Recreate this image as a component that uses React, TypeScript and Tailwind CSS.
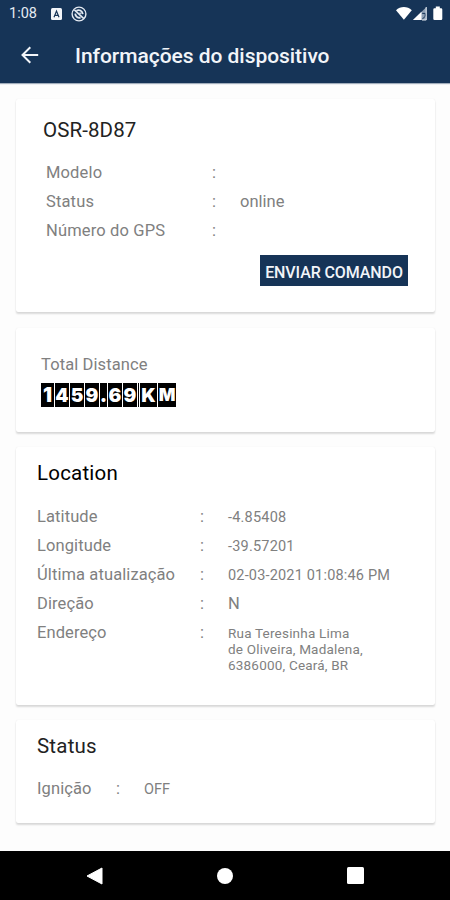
import type { ReactNode } from "react";
import clsx from "clsx";

type Field = {
  label: string;
  value?: string;
  valueClass?: string;
};

const locationFields: Field[] = [
  { label: "Latitude", value: "-4.85408", valueClass: "text-[14.5px] tracking-[0.2px]" },
  { label: "Longitude", value: "-39.57201", valueClass: "text-[14.5px] tracking-[0.2px]" },
  { label: "Última atualização", value: "02-03-2021 01:08:46 PM", valueClass: "text-[14.5px] tracking-[0.18px]" },
  { label: "Direção", value: "N", valueClass: "text-[16.5px]" },
];

const odometer = [
  { char: "1", width: "w-[13px] text-[20px]" },
  { char: "4", width: "w-[14px] text-[19px]" },
  { char: "5", width: "w-[14px] text-[19px]" },
  { char: "9", width: "w-[14px] text-[19px]" },
  { char: ".", width: "w-[7px] text-[20px]" },
  { char: "6", width: "w-[14px] text-[19px]" },
  { char: "9", width: "w-[14px] text-[19px]" },
  { char: "", width: "w-[1px]" },
  { char: "K", width: "w-[17px] text-[19px]" },
  { char: "M", width: "w-[18px] text-[17.5px]" },
];

function Card({ className, children }: { className?: string; children: ReactNode }) {
  return (
    <section
      className={clsx(
        "rounded-[2px] bg-white shadow-[0_2px_2px_rgba(0,0,0,0.14),0_0_1px_rgba(0,0,0,0.1)]",
        className
      )}
    >
      {children}
    </section>
  );
}

function StatusBar() {
  return (
    <div className="flex h-[27px] items-center justify-between pl-[9px] pr-[7px]">
      <div className="flex items-center">
        <span className="w-[42px] pt-px text-[14.5px] leading-none text-[#e4eaf2]">1:08</span>
        <svg width="11" height="12" viewBox="0 0 11 12">
          <rect width="11" height="12" rx="1.5" fill="#f2f5f9" />
          <path d="M3 9.2 5.5 3 8 9.2M4 7.3h3" fill="none" stroke="#163457" strokeWidth="1.2" />
        </svg>
        <svg className="ml-[9px]" width="16" height="16" viewBox="0 0 16 16" fill="none" stroke="#e4eaf2">
          <circle cx="8" cy="8" r="6.9" strokeWidth="1.4" />
          <path d="M3.4 3.8 12.8 12.6" strokeWidth="1.6" />
          <path d="M5.4 4.8C8 3.2 11.4 4.6 11.8 8.2M4.2 7.6C4.4 10.6 7 12.2 9.6 11.6" strokeWidth="1.8" />
          <path d="M8.2 7.2h2.2" strokeWidth="1.2" />
        </svg>
      </div>
      <svg width="47" height="15" viewBox="0 0 47 15">
        <path d="M0 4.2C4.4 0 11.4 0 15.8 4.2L7.9 13.8Z" fill="#fff" />
        <path d="M17 14 30.5 1V14Z" fill="#8fa0b4" />
        <path d="M17 14 25.5 5.8V14Z" fill="#fff" />
        <path d="M26.2 7.4h3v3l-3 2.8" fill="none" stroke="#163457" strokeWidth="1" />
        <path d="M30.2 1V14H26" fill="none" stroke="#e4eaf2" strokeWidth="1" />
        <path d="M39.8 0.6h4v1.6h1.3a1.2 1.2 0 0 1 1.2 1.2v9.4a1.2 1.2 0 0 1-1.2 1.2h-6.6a1.2 1.2 0 0 1-1.2-1.2V3.4a1.2 1.2 0 0 1 1.2-1.2h1.3Z" fill="#fff" />
      </svg>
    </div>
  );
}

function Header() {
  return (
    <header className="h-[83px] shrink-0 bg-[#163457] shadow-[0_1px_1px_rgba(22,52,87,0.4)]">
      <StatusBar />
      <div className="flex h-[56px] items-center pl-[21px]">
        <svg width="18" height="18" viewBox="0 0 18 18" fill="none" stroke="#f2f5f9" strokeWidth="2">
          <path d="M17.2 9H2M9.3 1.2 1.5 9l7.8 7.8" />
        </svg>
        <h1 className="ml-[36px] whitespace-nowrap pt-[2px] text-[21px] font-medium leading-none tracking-[-0.04px] text-[#f2f5f9]">
          Informações do dispositivo
        </h1>
      </div>
    </header>
  );
}

function DeviceRow({ label, value }: Field) {
  return (
    <div className="flex h-[29px] items-center text-[16.5px] tracking-[0.15px]">
      <span className="w-[166px]">{label}</span>
      <span className="w-[28px]">:</span>
      <span className="tracking-normal">{value}</span>
    </div>
  );
}

function NavigationBar() {
  return (
    <nav className="flex h-[49px] shrink-0 items-center justify-between bg-black px-[86px]">
      <svg width="17" height="18" viewBox="0 0 17 18" fill="#fff">
        <path d="M16 1v16L1 9Z" stroke="#fff" strokeLinejoin="round" />
      </svg>
      <span className="size-[16px] rounded-full bg-white" />
      <span className="size-[17px] rounded-[1.5px] bg-white" />
    </nav>
  );
}

export default function App() {
  return (
    <div className="flex h-[900px] w-[450px] flex-col overflow-hidden bg-[#fdfdfd] font-['Roboto',sans-serif] text-[#808080]">
      <Header />
      <main className="flex flex-1 flex-col pl-4 pr-[15px] pt-4">
        <Card className="flex h-[213px] flex-col pl-[27px] pt-[19px]">
          <h2 className="text-[20.5px] leading-6 tracking-[0.1px] text-[#222]">OSR-8D87</h2>
          <div className="mt-[17px] pl-[3px]">
            <DeviceRow label="Modelo" />
            <DeviceRow label="Status" value="online" />
            <DeviceRow label="Número do GPS" />
          </div>
          <button className="ml-auto mr-[27px] mt-[9px] flex h-[31px] w-[148px] items-center justify-center whitespace-nowrap bg-[#163457] pt-[4px] text-[16px] font-medium tracking-[-0.1px] text-[#f2f5f9]">
            ENVIAR COMANDO
          </button>
        </Card>

        <Card className="mt-4 h-[104px] pl-[25px] pt-[27px]">
          <p className="text-[16.5px] leading-5 tracking-[0.1px]">Total Distance</p>
          <div className="mt-[8px] flex h-[24px] gap-px font-['Inter','Roboto',sans-serif]">
            {odometer.map(({ char, width }, index) => (
              <span
                key={index}
                className={clsx(
                  "flex items-center justify-center bg-black font-black leading-none text-white",
                  width
                )}
              >
                {char}
              </span>
            ))}
          </div>
        </Card>

        <Card className="mt-[15px] h-[258px] pl-[21px] pt-[14px]">
          <h2 className="text-[20.5px] leading-6 tracking-[0.2px] text-black">Location</h2>
          <div className="mt-[18px]">
            {locationFields.map(({ label, value, valueClass }) => (
              <div key={label} className="flex h-[29px] items-center">
                <span className="w-[163px] text-[16.5px] tracking-[0.1px]">{label}</span>
                <span className="w-[28px] text-[16.5px]">:</span>
                <span className={valueClass}>{value}</span>
              </div>
            ))}
            <div className="flex pt-[4px]">
              <span className="w-[163px] text-[16.5px] leading-5 tracking-[0.1px]">Endereço</span>
              <span className="w-[28px] text-[16.5px] leading-5">:</span>
              <p className="pt-[2px] text-[13.5px] leading-[16px] tracking-[0.2px]">
                Rua Teresinha Lima
                <br />
                de Oliveira, Madalena,
                <br />
                6386000, Ceará, BR
              </p>
            </div>
          </div>
        </Card>

        <Card className="mt-[15px] h-[103px] pl-[21px] pt-[14px]">
          <h2 className="text-[20.5px] leading-6 tracking-[0.2px] text-[#222]">Status</h2>
          <div className="mt-[17px] flex h-[29px] items-center text-[16.5px]">
            <span className="w-[79px] tracking-[0.1px]">Ignição</span>
            <span className="w-[28px]">:</span>
            <span className="text-[14.5px]">OFF</span>
          </div>
        </Card>
      </main>
      <NavigationBar />
    </div>
  );
}
